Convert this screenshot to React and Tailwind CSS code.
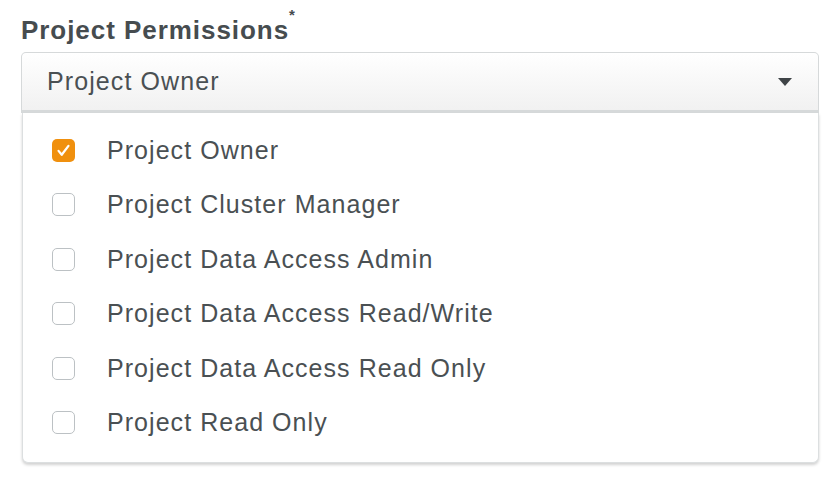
import React, { useState } from 'react';

const options = [
  'Project Owner',
  'Project Cluster Manager',
  'Project Data Access Admin',
  'Project Data Access Read/Write',
  'Project Data Access Read Only',
  'Project Read Only',
];

const CheckIcon = () => (
  <svg viewBox="0 0 24 24" className="w-[17px] h-[17px]" fill="none" stroke="white" strokeWidth="3.2" strokeLinecap="round" strokeLinejoin="round">
    <path d="M5 12.5l4.5 5.5L19 5.5" />
  </svg>
);

export default function App() {
  const [selected, setSelected] = useState(['Project Owner']);

  const toggle = (opt) => {
    setSelected((s) => (s.includes(opt) ? s.filter((x) => x !== opt) : [...s, opt]));
  };

  return (
    <div className="w-[840px] h-[502px] bg-white pl-[21px] pr-[21px] pt-[13px]" style={{ fontFamily: '"Liberation Sans", Arial, sans-serif' }}>
      <div className="text-[26px] leading-[34px] font-bold text-[#464c4f] tracking-[0.95px]">
        Project Permissions<sup className="text-[15px] align-top relative top-[2px]">*</sup>
      </div>

      <div className="mt-[5px] h-[61px] border border-b-[3px] border-[#d6d9da] rounded-t-[5px] bg-gradient-to-b from-white to-[#f1f1f1] flex items-center justify-between pl-[25px] pr-[26px]">
        <span className="text-[25px] tracking-[1.1px] text-[#4a5053]">{selected[0] || 'Select'}</span>
        <svg viewBox="0 0 14 8" className="w-[14px] h-[8px]">
          <path d="M0 0h14L7 8z" fill="#3f4447" />
        </svg>
      </div>

      <div className="ml-[1px] h-[350px] bg-white rounded-b-[6px] border border-t-0 border-[#dcdfe0] shadow-[0_2px_3px_rgba(0,0,0,0.18)] pt-[10px]">
        {options.map((opt) => {
          const checked = selected.includes(opt);
          return (
            <div key={opt} onClick={() => toggle(opt)} className="h-[54.5px] flex items-center pl-[29px] cursor-pointer">
              <div
                className={
                  checked
                    ? 'w-[23px] h-[23px] rounded-[5px] bg-[#f0900e] flex items-center justify-center'
                    : 'w-[23px] h-[23px] rounded-[5px] border border-[#bcc1c4] bg-white'
                }
              >
                {checked && <CheckIcon />}
              </div>
              <span className="ml-[32px] text-[25px] tracking-[1.05px] text-[#4a5053]">{opt}</span>
            </div>
          );
        })}
      </div>
    </div>
  );
}
